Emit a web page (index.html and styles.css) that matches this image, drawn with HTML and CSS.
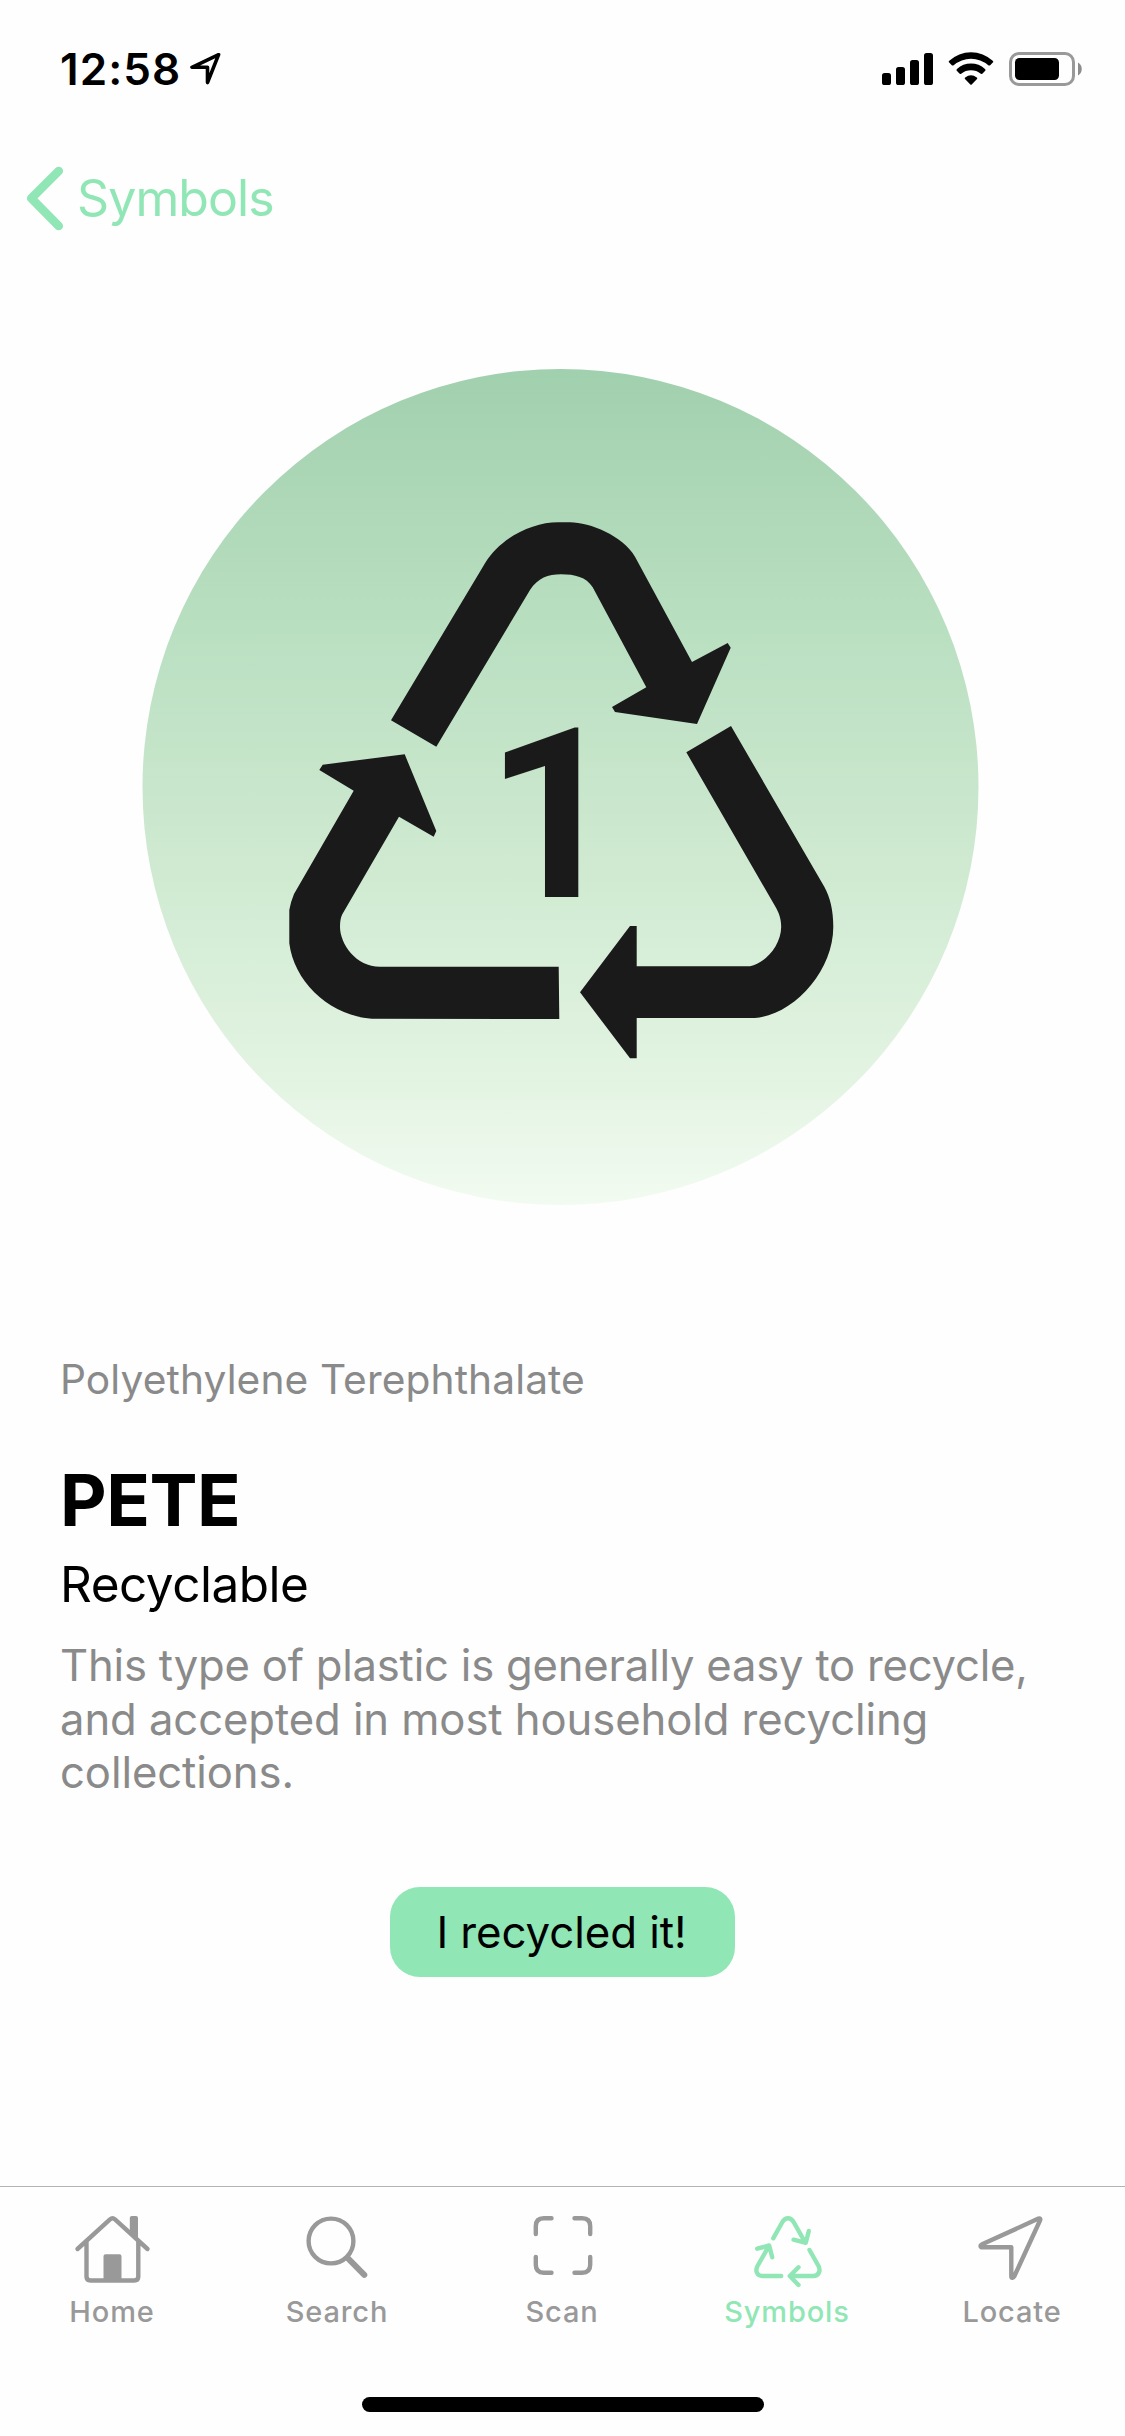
FILE: index.html
```html
<!DOCTYPE html>
<html lang="en">
<head>
  <meta charset="utf-8">
  <title>Symbols – PETE</title>
  <link rel="stylesheet" href="styles.css">
</head>
<body>
  <div class="screen">
    <header class="status">
      <span class="status-time">12:58</span>
      <svg class="status-location" width="32" height="34" viewBox="0 0 32 34">
        <path d="M28.600 2.700 2 15.300H17.500V30.600Z"/>
      </svg>
      <svg class="status-icons" width="204" height="40" viewBox="880 49 204 40">
        <g>
          <rect x="882" y="73" width="9" height="12" rx="2.6"/>
          <rect x="896" y="67" width="9" height="18" rx="2.6"/>
          <rect x="910" y="60" width="9" height="25" rx="2.6"/>
          <rect x="924" y="53" width="9" height="32" rx="2.6"/>
        </g>
        <g>
          <path d="M949.2 62.6Q948.2 61.6 949.3 60.7A32 32 0 0 1 992.7 60.7Q993.8 61.6 992.8 62.6L990.2 65.2Q989.3 66 988.3 65.2A26.5 26.5 0 0 0 953.7 65.2Q952.7 66 951.8 65.2Z"/>
          <path d="M956.8 70.8Q955.9 69.8 957 68.9A21 21 0 0 1 985 68.9Q986.1 69.8 985.2 70.8L982.6 73.6Q981.8 74.4 980.8 73.7A15.5 15.5 0 0 0 961.2 73.7Q960.2 74.4 959.4 73.6Z"/>
          <path d="M965 79Q964.200 78.200 965.200 77.400A10 10 0 0 1 976.800 77.400Q977.800 78.200 977 79L971.700 84.500Q971 85.200 970.300 84.500Z"/>
        </g>
        <rect class="battery-shell" x="1010.500" y="53.500" width="63" height="31" rx="8.500"/>
        <rect x="1015" y="58" width="44" height="22" rx="4.500"/>
        <path class="battery-cap" d="M1078 62.500A7.500 7.500 0 0 1 1078 75.500Z"/>
      </svg>
    </header>

    <nav class="nav">
      <svg width="44" height="72" viewBox="0 0 44 72">
        <path d="M36.700 9 9.300 36.300 36.700 64"/>
      </svg>
      <a class="nav-back">Symbols</a>
    </nav>

    <main class="content">
      <svg class="hero" width="837" height="837" viewBox="142 369 837 837">
        <defs>
          <linearGradient id="fade" x1="0" y1="0" x2="0" y2="1">
            <stop offset="0" stop-color="#a1d0af"/>
            <stop offset=".16" stop-color="#aed8b7"/>
            <stop offset=".31" stop-color="#b9dfc1"/>
            <stop offset=".5" stop-color="#c8e6cb"/>
            <stop offset=".7" stop-color="#d7eed8"/>
            <stop offset=".86" stop-color="#e4f4e3"/>
            <stop offset="1" stop-color="#f2fbf1"/>
          </linearGradient>
        </defs>
        <circle cx="560.500" cy="787" r="418" fill="url(#fade)"/>
        <g class="hero-mark">
          <path d="M391 720.300 485 563.300C500 538 532 522.300 558 522.300H570C590 522.300 623 536 635 556.700L692 662 727.700 643 730.700 647.700 697 724 615 712 612 707 646.300 687.300 592.700 587.300C586 577 575 574.300 561 574.300 548 574.300 538 578 530 590L436.300 746.700Z"/>
          <path d="M731 726 824.300 886.700C830 897 833.300 910 833.300 926.700 833.300 972 793 1015 755 1018H636.700V1058.300H630L580 992.300 630 926H636.700V966.300H750C765 963 781 946 781.200 926.700 781 918 779 913 775 906L686.300 752.300Z"/>
          <path d="M404.700 754.300 436.300 831 433.700 836.700 399 816.700 342.300 914.300Q340 919 340 926.700C340 944 356 966.700 380 966.700H558.700L559.300 1019 371.700 1018.700C330 1016 294 982 289.300 943.300V910Q291 901 294 894L353.700 790.700 319.300 770 322.700 764.700Z"/>
          <text x="485.500" y="897.200">1</text>
        </g>
      </svg>

      <section class="details">
        <p class="polymer">Polyethylene Terephthalate</p>
        <h1 class="code">PETE</h1>
        <h2 class="verdict">Recyclable</h2>
        <p class="description">This type of plastic is generally easy to recycle, and accepted in most household recycling collections.</p>
      </section>

      <button class="action" type="button">I recycled it!</button>
    </main>

    <footer class="tabs">
      <div class="tab-row">
        <a class="tab">
          <svg width="80" height="76" viewBox="0 0 80 76">
            <path d="M4.500 35 37 5.400Q39.500 3.200 42 5.400L74.500 35M13.500 27V62.500Q13.500 66.500 17.500 66.500H61.300Q65.300 66.500 65.300 62.500V27"/>
            <path class="solid" d="M30.500 67V42.300Q30.500 40.300 32.500 40.300H46.500Q48.500 40.300 48.500 42.300V67ZM56.800 17V4Q56.800 2 58.800 2H63Q65 2 65 4V24.500Z"/>
          </svg>
          <span>Home</span>
        </a>
        <a class="tab">
          <svg width="80" height="76" viewBox="0 0 80 76">
            <circle cx="33" cy="27" r="22.400"/>
            <path class="handle" d="M50 44.300 66.300 60.800"/>
          </svg>
          <span>Search</span>
        </a>
        <a class="tab">
          <svg width="80" height="76" viewBox="0 0 80 76">
            <path d="M12.800 20V12.300Q12.800 4.300 20.800 4.300H28.500M51.500 4.300H59.200Q67.200 4.300 67.200 12.300V20M67.200 43V50.700Q67.200 58.700 59.200 58.700H51.500M28.500 58.700H20.800Q12.800 58.700 12.800 50.700V43"/>
          </svg>
          <span>Scan</span>
        </a>
        <a class="tab active">
          <svg width="80" height="76" viewBox="0 0 80 76">
            <path d="M25.200 24.300 34.400 8Q36.600 4.200 40 4.200T45.600 8L57.300 28.700M60.800 17 57.800 28.800 45.500 25.700"/>
            <path d="M61.500 36 70.500 52C73 57 70.500 62 65.200 62H42.500M50.500 53.300 41.800 62 50.500 71"/>
            <path d="M33.200 62H14.500C9 62 7 57 9.500 52L21 31.800M9.200 34.700 21.200 31.500 24.200 43.300"/>
          </svg>
          <span>Symbols</span>
        </a>
        <a class="tab">
          <svg width="80" height="76" viewBox="0 0 80 76">
            <path d="M65.500 4.600 8.600 30.600C7 31.400 7.300 33.300 9.200 33.300H38.300V62.200C38.300 64.200 40.200 64.300 41.200 62.500L67 6.500C67.800 4.700 67 4 65.500 4.600Z"/>
          </svg>
          <span>Locate</span>
        </a>
      </div>
      <div class="home-indicator"></div>
    </footer>
  </div>
</body>
</html>
```
FILE: styles.css
```css
* {
  box-sizing: border-box;
  margin: 0;
}

body {
  font-family: "Inter", "Liberation Sans", sans-serif;
  color: #000;
  background: #fefefe;
}

.screen {
  display: flex;
  flex-direction: column;
  width: 1125px;
  height: 2436px;
}

.status {
  display: flex;
  align-items: center;
  height: 132px;
  padding: 6px 41px 0 60px;
}

.status-time {
  font-size: 44px;
  font-weight: 600;
  letter-spacing: 1.1px;
}

.status-location {
  margin-left: 9px;
  fill: none;
  stroke: #000;
  stroke-width: 3.6;
  stroke-linejoin: round;
}

.status-icons {
  margin-left: auto;
}

.battery-shell {
  fill: none;
  stroke: #999;
  stroke-width: 3;
}

.battery-cap {
  fill: #8c8c8c;
}

.nav {
  display: flex;
  align-items: center;
  height: 132px;
  padding-left: 22px;
  color: #90e6b5;
}

.nav svg {
  fill: none;
  stroke: currentColor;
  stroke-width: 8.7;
  stroke-linecap: round;
  stroke-linejoin: round;
}

.nav-back {
  margin-left: 11px;
  font-size: 50px;
  letter-spacing: -0.9px;
}

.content {
  display: flex;
  flex: 1;
  flex-direction: column;
  align-items: center;
  padding-top: 105px;
}

.hero {
  flex: none;
  margin-right: 4px;
}

.hero-mark {
  fill: #1a1a1a;
}

.hero-mark text {
  font-family: "Roboto", "Liberation Sans", sans-serif;
  font-size: 237px;
  font-weight: 700;
}

.details {
  align-self: stretch;
  padding: 149px 60px 0;
}

.polymer {
  font-size: 40.7px;
  line-height: 50px;
  letter-spacing: 0.1px;
  color: #8a8a8a;
}

.code {
  margin-top: 51.5px;
  font-size: 72px;
  font-weight: 700;
  line-height: 86px;
  letter-spacing: -0.5px;
}

.verdict {
  margin-top: 11.5px;
  font-size: 49.5px;
  font-weight: 400;
  line-height: 60px;
  letter-spacing: -0.5px;
}

.description {
  margin-top: 25px;
  font-size: 43.6px;
  line-height: 53.6px;
  letter-spacing: -0.07px;
  color: #8a8a8a;
}

.description::first-line {
  letter-spacing: -0.2px;
}

.action {
  width: 345px;
  height: 90px;
  margin-top: 87.2px;
  padding: 1px 2px 0 0;
  border: 0;
  border-radius: 30px;
  font: 400 43.8px/89px "Inter", "Liberation Sans", sans-serif;
  letter-spacing: -0.07px;
  color: #000;
  background: #90e6b5;
}

.tabs {
  display: flex;
  flex-direction: column;
  align-items: center;
  height: 250px;
  border-top: 1px solid #b3b3b3;
}

.tab-row {
  display: grid;
  grid-template-columns: repeat(5, 1fr);
  width: 100%;
  padding-top: 27px;
}

.tab {
  display: flex;
  flex-direction: column;
  align-items: center;
  gap: 4.5px;
  font-size: 29px;
  font-weight: 500;
  line-height: 34px;
  letter-spacing: 0.85px;
  color: #999;
}

.tab svg {
  fill: none;
  stroke: currentColor;
  stroke-width: 4.4;
  stroke-linecap: round;
  stroke-linejoin: round;
}

.tab span {
  margin-right: 1px;
}

.tab .solid {
  fill: currentColor;
  stroke: none;
}

.tab .handle {
  stroke-width: 6;
}

.tab.active {
  color: #90e6b5;
}

.home-indicator {
  width: 402px;
  height: 15px;
  margin-top: 68.5px;
  border-radius: 7.5px;
  background: #000;
}
```
